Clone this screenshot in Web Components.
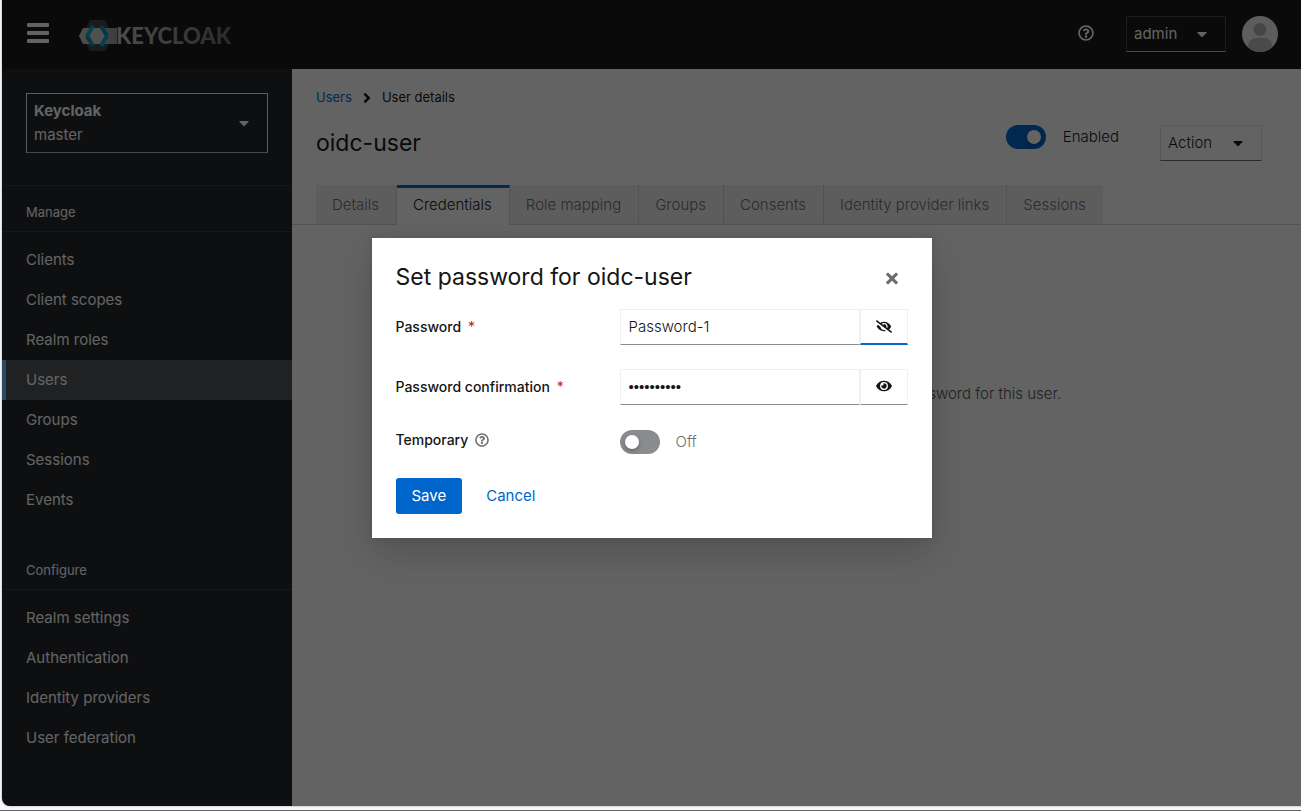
<!DOCTYPE html>
<html lang="en">
<head>
<meta charset="utf-8">
<meta name="viewport" content="width=device-width, initial-scale=1">
<title>Keycloak Administration Console</title>
<style>
  :root {
    --blue: #0066cc;
    --text: #151515;
    --text-muted: #6a6e73;
    --border: #d2d2d2;
    --border-light: #f0f0f0;
    --border-dark: #8a8d90;
  }

  body {
    margin: 0;
    background: #f6f6fb;
    color: var(--text);
    font-family: Inter, "Liberation Sans", sans-serif;
    font-size: 15px;
    line-height: 24px;
  }
</style>
</head>
<body>

<console-shell>
  <console-masthead slot="header" user="admin"></console-masthead>

  <console-sidebar slot="sidebar" realm="master">
    <nav-group label="Manage">
      <nav-item>Clients</nav-item>
      <nav-item>Client scopes</nav-item>
      <nav-item>Realm roles</nav-item>
      <nav-item current>Users</nav-item>
      <nav-item>Groups</nav-item>
      <nav-item>Sessions</nav-item>
      <nav-item>Events</nav-item>
    </nav-group>
    <nav-group label="Configure">
      <nav-item>Realm settings</nav-item>
      <nav-item>Authentication</nav-item>
      <nav-item>Identity providers</nav-item>
      <nav-item>User federation</nav-item>
    </nav-group>
  </console-sidebar>

  <user-header username="oidc-user"></user-header>
  <tab-bar>
    <tab-item>Details</tab-item>
    <tab-item current>Credentials</tab-item>
    <tab-item>Role mapping</tab-item>
    <tab-item>Groups</tab-item>
    <tab-item>Consents</tab-item>
    <tab-item>Identity provider links</tab-item>
    <tab-item>Sessions</tab-item>
  </tab-bar>
  <empty-state>This user does not have any credentials. You can set password for this user.</empty-state>

  <modal-dialog slot="modal" heading="Set password for oidc-user">
    <password-field label="Password" value="Password-1" revealed></password-field>
    <password-field label="Password confirmation" value="Password-1"></password-field>
    <switch-field label="Temporary"></switch-field>
    <action-button slot="actions" variant="primary">Save</action-button>
    <action-button slot="actions" variant="link">Cancel</action-button>
  </modal-dialog>
</console-shell>

<script>
// [viewBox width, viewBox height, path]
const ICONS = {
  bars: [22, 20, "M1 0h20a1 1 0 0 1 1 1v2a1 1 0 0 1-1 1H1a1 1 0 0 1-1-1V1a1 1 0 0 1 1-1zM1 8h20a1 1 0 0 1 1 1v2a1 1 0 0 1-1 1H1a1 1 0 0 1-1-1V9a1 1 0 0 1 1-1zM1 16h20a1 1 0 0 1 1 1v2a1 1 0 0 1-1 1H1a1 1 0 0 1-1-1v-2a1 1 0 0 1 1-1z"],
  caret: [320, 512, "M31.3 192h257.3c17.8 0 26.7 21.5 14.1 34.1L174.1 354.8c-7.8 7.8-20.5 7.8-28.3 0L17.2 226.1C4.6 213.5 13.5 192 31.3 192z"],
  angle: [256, 512, "M224.3 273l-136 136c-9.4 9.4-24.6 9.4-33.9 0l-22.6-22.6c-9.4-9.4-9.4-24.6 0-33.9l96.4-96.4-96.4-96.4c-9.4-9.4-9.4-24.6 0-33.9L54.3 103c9.4-9.4 24.6-9.4 33.9 0l136 136c9.5 9.4 9.5 24.6.1 34z"],
  times: [352, 512, "M242.72 256l100.07-100.07c12.28-12.28 12.28-32.19 0-44.48l-22.24-22.24c-12.28-12.28-32.19-12.28-44.48 0L176 189.28 75.93 89.21c-12.28-12.28-32.19-12.28-44.48 0L9.21 111.45c-12.28 12.28-12.28 32.19 0 44.48L109.28 256 9.21 356.07c-12.28 12.28-12.28 32.19 0 44.48l22.24 22.24c12.28 12.28 32.2 12.28 44.48 0L176 322.72l100.07 100.07c12.28 12.28 32.2 12.28 44.48 0l22.24-22.24c12.28-12.28 12.28-32.19 0-44.48L242.72 256z"],
  help: [512, 512, "M256 8C119.043 8 8 119.083 8 256c0 136.997 111.043 248 248 248s248-111.003 248-248C504 119.083 392.957 8 256 8zm0 440c-106 0-192-86-192-192S150 64 256 64s192 86 192 192-86 192-192 192zm107.244-247.2c0 67.052-72.421 68.084-72.421 92.863V300c0 6.627-5.373 12-12 12h-45.647c-6.627 0-12-5.373-12-12v-8.659c0-35.745 27.1-50.034 47.579-61.516 17.561-9.845 28.324-16.541 28.324-29.579 0-17.246-21.999-28.693-39.784-28.693-23.189 0-33.894 10.977-48.942 29.969-4.057 5.12-11.46 6.071-16.666 2.124l-27.824-21.098c-5.107-3.872-6.251-11.066-2.644-16.363C184.846 131.491 214.94 112 261.794 112c49.071 0 101.45 38.304 101.45 88.8zM298 368c0 23.159-18.841 42-42 42s-42-18.841-42-42 18.841-42 42-42 42 18.841 42 42z"],
  eye: [576, 512, "M572.52 241.4C518.29 135.59 410.93 64 288 64S57.68 135.64 3.48 241.41a32.35 32.35 0 0 0 0 29.19C57.71 376.41 165.07 448 288 448s230.32-71.64 284.52-177.41a32.35 32.35 0 0 0 0-29.19zM288 400a144 144 0 1 1 144-144 143.93 143.93 0 0 1-144 144zm0-240a95.31 95.31 0 0 0-25.31 3.79 47.85 47.85 0 0 1-66.9 66.9A95.78 95.78 0 1 0 288 160z"],
  eyeSlash: [640, 512, "M320 400c-75.85 0-137.25-58.71-142.9-133.11L72.2 185.82c-13.79 17.3-26.48 35.59-36.72 55.59a32.35 32.35 0 0 0 0 29.19C89.71 376.41 197.07 448 320 448c26.91 0 52.87-4 77.89-10.46L346 397.39a144.13 144.13 0 0 1-26 2.61zm313.82 58.1l-110.55-85.44a331.25 331.25 0 0 0 81.25-102.07 32.35 32.35 0 0 0 0-29.19C550.29 135.59 442.93 64 320 64a308.15 308.15 0 0 0-147.32 37.7L45.46 3.37A16 16 0 0 0 23 6.18L3.37 31.45A16 16 0 0 0 6.18 53.9l588.36 454.73a16 16 0 0 0 22.46-2.81l19.64-25.27a16 16 0 0 0-2.82-22.45zm-183.72-142l-39.3-30.38A94.75 94.75 0 0 0 416 256a94.76 94.76 0 0 0-121.31-92.21A47.65 47.65 0 0 1 304 192a46.64 46.64 0 0 1-1.54 10l-73.61-56.89A142.31 142.31 0 0 1 320 112a143.92 143.92 0 0 1 144 144c0 21.63-5.29 41.79-13.9 60.11z"],
};

function icon(name, width, height) {
  const [w, h, path] = ICONS[name];
  return `<svg viewBox="0 0 ${w} ${h}" width="${width}" height="${height}" fill="currentColor" aria-hidden="true"><path d="${path}"/></svg>`;
}

// Rules every shadow root starts with
const BASE_STYLE = `
  * { box-sizing: border-box; }
  svg { display: block; flex: none; }
  a { color: inherit; text-decoration: none; }
  button, input { margin: 0; font: inherit; color: inherit; }
  button { padding: 0; border: 0; background: none; cursor: pointer; }
`;

const SWITCH_STYLE = `
  .switch {
    flex: none;
    appearance: none;
    display: flex;
    align-items: center;
    width: 40px;
    height: 24px;
    padding: 0 5px;
    border-radius: 12px;
    background: var(--border-dark);
    cursor: pointer;
  }
  .switch::before {
    content: "";
    width: 14px;
    height: 14px;
    border-radius: 50%;
    background: #fff;
    box-shadow: 0 2px 4px rgba(3, 3, 3, .3);
  }
  .switch:checked { background: var(--blue); justify-content: flex-end; }
`;

class ConsoleElement extends HTMLElement {
  constructor() {
    super();
    this.attachShadow({ mode: "open" });
  }

  connectedCallback() {
    this.shadowRoot.innerHTML = `<style>${BASE_STYLE}${this.styles()}</style>${this.markup()}`;
  }
}

class ConsoleShell extends ConsoleElement {
  styles() {
    return `
      :host {
        display: flex;
        flex-direction: column;
        min-height: 100vh;
        box-sizing: border-box;
        padding: 0 0 4px 2px;
        border-bottom: 1px solid #66666b;
      }
      .frame {
        position: relative;
        flex: 1;
        display: grid;
        grid-template: auto 1fr / 290px 1fr;
        overflow: hidden;
        border-bottom-left-radius: 8px;
        background: #fff;
        box-shadow: 0 0 2px rgba(0, 0, 0, .4);
      }
      slot[name="header"] { display: block; grid-column: 1 / -1; }
      slot[name="sidebar"] { display: grid; }
      main { min-width: 0; }
    `;
  }

  markup() {
    return `
      <div class="frame">
        <slot name="header"></slot>
        <slot name="sidebar"></slot>
        <main><slot></slot></main>
        <slot name="modal"></slot>
      </div>
    `;
  }
}
customElements.define("console-shell", ConsoleShell);

class ConsoleMasthead extends ConsoleElement {
  styles() {
    return `
      :host { display: block; background: #151515; color: #fff; }
      header {
        display: flex;
        align-items: center;
        height: 69px;
        padding: 0 23px 1px 25px;
      }
      .menu { margin-right: 30px; padding-bottom: 2px; }
      .brand { margin-right: auto; padding-top: 3px; }
      .brand text { font: 900 22px Lato, sans-serif; }
      .help { margin-right: 32px; padding-bottom: 2px; }
      .account {
        display: flex;
        align-items: center;
        justify-content: space-between;
        width: 100px;
        height: 36px;
        margin-right: 16px;
        padding: 0 18px 0 7px;
        border: 1px solid #444548;
        border-bottom-color: #b8bbbe;
      }
      .avatar { border-radius: 50%; }
    `;
  }

  markup() {
    return `
      <header>
        <button class="menu" aria-label="Global navigation">${icon("bars", 22, 20)}</button>
        <a class="brand" href="#" aria-label="Keycloak home">
          <svg width="154" height="32" viewBox="0 0 154 32">
            <defs>
              <linearGradient id="word" gradientUnits="userSpaceOnUse" x1="38" y1="0" x2="152" y2="0">
                <stop offset="0" stop-color="#c4c4c4"/>
                <stop offset="1" stop-color="#6c6c6c"/>
              </linearGradient>
              <linearGradient id="band" x1="0" y1="0" x2="1" y2="0">
                <stop offset="0" stop-color="#c8c8c8"/>
                <stop offset="1" stop-color="#9c9c9c"/>
              </linearGradient>
            </defs>
            <path fill="#424242" d="M11 0h15l8 15.500-8 15.500H11L3 15.500z"/>
            <path fill="url(#band)" d="M4 8h34v16H4L0 16z"/>
            <path fill="#cecece" d="M15 8h6l5 8-5 8h-6l-5-8z"/>
            <g fill="none" stroke-width="4" stroke-linejoin="round">
              <path stroke="#00a8cf" d="M14 6 8 16"/>
              <path stroke="#008fb2" d="M8 16l6 10"/>
              <path stroke="#008fb2" d="M22 6l6 10"/>
              <path stroke="#00a8cf" d="M28 16l-6 10"/>
            </g>
            <text x="37" y="24" fill="url(#word)">KEYCLOAK</text>
          </svg>
        </a>
        <button class="help" aria-label="Help">${icon("help", 16, 16)}</button>
        <button class="account" aria-haspopup="menu"><span>${this.getAttribute("user")}</span>${icon("caret", 10, 16)}</button>
        <svg class="avatar" width="36" height="36" viewBox="0 0 36 36" role="img" aria-label="Avatar">
          <path fill="#f0f0f0" d="M0 0h36v36H0z"/>
          <circle cx="18" cy="13.500" r="6.500" fill="#b2b4b6"/>
          <path fill="#bcbec0" d="M6 36v-6c0-5 4-8 8-8h8c5 0 8 3 8 8v6z"/>
          <path fill="#b2b4b6" d="M12 36v-5l1 5zM25 36v-5l-1 5z"/>
        </svg>
      </header>
    `;
  }
}
customElements.define("console-masthead", ConsoleMasthead);

class ConsoleSidebar extends ConsoleElement {
  styles() {
    return `
      :host { display: block; background: #212427; color: #fff; }
      .realm {
        padding: 24px 24px 32px;
        border-bottom: 1px solid #35383b;
      }
      .realm button {
        display: flex;
        align-items: center;
        justify-content: space-between;
        width: 100%;
        height: 60px;
        padding: 0 18px 0 7px;
        border: 1px solid #f0f0f0;
        border-bottom-color: #b8bbbe;
        text-align: left;
      }
      strong, .name { display: block; }
    `;
  }

  markup() {
    return `
      <div class="realm">
        <button aria-haspopup="listbox">
          <span>
            <strong>Keycloak</strong>
            <span class="name">${this.getAttribute("realm")}</span>
          </span>
          ${icon("caret", 10, 16)}
        </button>
      </div>
      <nav aria-label="Global"><slot></slot></nav>
    `;
  }
}
customElements.define("console-sidebar", ConsoleSidebar);

class NavGroup extends ConsoleElement {
  styles() {
    return `
      :host { display: block; margin-bottom: 24px; }
      h2 {
        margin: 0 0 8px;
        padding: 16px 24px 8px;
        border-bottom: 1px solid #35383b;
        font-size: 13px;
        font-weight: 400;
        line-height: 21px;
      }
    `;
  }

  markup() {
    return `
      <section>
        <h2>${this.getAttribute("label")}</h2>
        <slot></slot>
      </section>
    `;
  }
}
customElements.define("nav-group", NavGroup);

class NavItem extends ConsoleElement {
  styles() {
    return `
      :host { display: block; }
      a {
        display: block;
        padding: 8px 24px 8px 20px;
        border-left: 4px solid transparent;
      }
      :host([current]) a { border-left-color: #73bcf7; background: #4f5255; }
    `;
  }

  markup() {
    return `<a href="#"><slot></slot></a>`;
  }
}
customElements.define("nav-item", NavItem);

class UserHeader extends ConsoleElement {
  styles() {
    return `
      :host { display: block; padding: 18px 39px 24px 24px; }
      ol {
        display: flex;
        align-items: center;
        margin: 0;
        padding: 0;
        list-style: none;
        font-size: 13px;
        line-height: 21px;
      }
      li { display: flex; align-items: center; }
      li svg { margin: 0 11px; }
      li a { color: var(--blue); }
      .row {
        display: flex;
        align-items: flex-start;
        margin-top: 17px;
      }
      h1 {
        margin: 0 auto 0 0;
        padding-top: 3px;
        font-size: 23px;
        font-weight: 400;
        line-height: 31px;
      }
      label {
        display: flex;
        align-items: center;
        gap: 17px;
        margin-right: 41px;
        font-weight: 300;
      }
      .action {
        display: flex;
        align-items: center;
        justify-content: space-between;
        width: 102px;
        height: 36px;
        padding: 0 18px 0 7px;
        border: 1px solid #e4e4e4;
        border-bottom-color: #6a6e73;
        font-weight: 300;
      }
      ${SWITCH_STYLE}
    `;
  }

  markup() {
    return `
      <nav aria-label="Breadcrumb">
        <ol>
          <li><a href="#">Users</a>${icon("angle", 8, 16)}</li>
          <li>User details</li>
        </ol>
      </nav>
      <div class="row">
        <h1>${this.getAttribute("username")}</h1>
        <label><input class="switch" type="checkbox" role="switch" checked>Enabled</label>
        <button class="action" aria-haspopup="menu"><span>Action</span>${icon("caret", 10, 16)}</button>
      </div>
    `;
  }
}
customElements.define("user-header", UserHeader);

class TabBar extends ConsoleElement {
  styles() {
    return `
      :host {
        display: flex;
        padding-left: 24px;
        border-bottom: 1px solid var(--border);
      }
    `;
  }

  markup() {
    return `<slot></slot>`;
  }
}
customElements.define("tab-bar", TabBar);

class TabItem extends ConsoleElement {
  styles() {
    return `
      :host { display: block; }
      a {
        display: block;
        height: 39px;
        padding: 8px 17px 7px 16px;
        border-right: 1px solid var(--border);
        background: #f0f0f0;
        color: var(--text-muted);
        font-weight: 300;
        white-space: nowrap;
      }
      :host(:last-child) a { border-right: 0; }
      /* the open tab runs over the line below the bar */
      :host([current]) { margin-bottom: -1px; }
      :host([current]) a {
        height: 40px;
        padding-top: 5px;
        border-top: 3px solid var(--blue);
        background: #fff;
        color: var(--text);
      }
    `;
  }

  markup() {
    return `<a href="#"><slot></slot></a>`;
  }
}
customElements.define("tab-item", TabItem);

class EmptyState extends ConsoleElement {
  styles() {
    return `
      :host { display: block; padding: 157px 24px 0; text-align: center; }
      p { margin: 0; color: #4f5255; font-weight: 300; }
    `;
  }

  markup() {
    return `<p><slot></slot></p>`;
  }
}
customElements.define("empty-state", EmptyState);

class ModalDialog extends ConsoleElement {
  styles() {
    return `
      :host {
        position: absolute;
        inset: 0;
        display: flex;
        align-items: center;
        justify-content: center;
        padding-bottom: 30px;
        background: rgba(3, 3, 3, .62);
      }
      dialog {
        position: static;
        width: 560px;
        max-width: 100%;
        margin: 0;
        padding: 24px;
        border: 0;
        background: #fff;
        color: var(--text);
        box-shadow: 0 16px 32px rgba(3, 3, 3, .16), 0 0 8px rgba(3, 3, 3, .1);
      }
      .title {
        display: flex;
        align-items: center;
        justify-content: space-between;
        margin-bottom: 16px;
      }
      h2 {
        margin: 0;
        font-size: 23px;
        font-weight: 400;
        line-height: 31px;
      }
      .close { margin-right: 10px; padding-top: 2px; color: var(--text-muted); }
      .fields { display: grid; gap: 24px; }
      .actions { display: flex; gap: 8px; margin-top: 24px; }
    `;
  }

  markup() {
    return `
      <dialog open aria-labelledby="title">
        <div class="title">
          <h2 id="title">${this.getAttribute("heading")}</h2>
          <button class="close" aria-label="Close">${icon("times", 12, 17)}</button>
        </div>
        <div class="fields"><slot></slot></div>
        <div class="actions"><slot name="actions"></slot></div>
      </dialog>
    `;
  }

  connectedCallback() {
    super.connectedCallback();
    this.shadowRoot.querySelector(".close").addEventListener("click", () => this.remove());
  }
}
customElements.define("modal-dialog", ModalDialog);

const FIELD_STYLE = `
  :host {
    display: grid;
    grid-template-columns: 208px minmax(0, 1fr);
    column-gap: 16px;
  }
  .label {
    display: flex;
    align-items: center;
    align-self: start;
    gap: 7px;
    font-size: 14px;
    font-weight: 500;
    line-height: 20px;
  }
`;

class PasswordField extends ConsoleElement {
  styles() {
    return `
      ${FIELD_STYLE}
      .label { padding-top: 8px; }
      .required { color: #c9190b; font-weight: 400; }
      .group { display: flex; }
      input {
        flex: 1;
        min-width: 0;
        height: 36px;
        padding: 0 8px 1px;
        border: 1px solid var(--border-light);
        border-bottom-color: var(--border-dark);
        border-radius: 0;
        outline: 0;
        background: #fff;
        font-weight: 300;
      }
      input[type="password"] { font-family: "Liberation Sans", sans-serif; }
      button {
        display: grid;
        place-items: center;
        width: 48px;
        height: 36px;
        padding-bottom: 2px;
        border: 1px solid var(--border-light);
        border-bottom-color: var(--border-dark);
      }
      :host([revealed]) button { padding-bottom: 1px; border-bottom: 2px solid var(--blue); }
    `;
  }

  markup() {
    const revealed = this.hasAttribute("revealed");
    return `
      <label class="label" for="password"><span>${this.getAttribute("label")}</span><span class="required" aria-hidden="true">*</span></label>
      <div class="group">
        <input id="password" type="${revealed ? "text" : "password"}" value="${this.getAttribute("value")}" required>
        <button type="button" aria-label="${revealed ? "Hide" : "Show"} password">${icon(revealed ? "eyeSlash" : "eye", 16, revealed ? 13 : 14)}</button>
      </div>
    `;
  }

  connectedCallback() {
    super.connectedCallback();
    this.shadowRoot.querySelector("button").addEventListener("click", () => {
      this.setAttribute("value", this.shadowRoot.querySelector("input").value);
      this.toggleAttribute("revealed");
      this.connectedCallback();
    });
  }
}
customElements.define("password-field", PasswordField);

class SwitchField extends ConsoleElement {
  styles() {
    return `
      ${FIELD_STYLE}
      :host { padding-top: 1px; }
      .help { color: var(--text-muted); }
      .value {
        display: flex;
        align-items: center;
        gap: 16px;
        color: var(--text-muted);
        font-weight: 300;
      }
      ${SWITCH_STYLE}
    `;
  }

  markup() {
    return `
      <div class="label">
        <label for="switch">${this.getAttribute("label")}</label>
        <button class="help" type="button" aria-label="More info">${icon("help", 14, 14)}</button>
      </div>
      <div class="value">
        <input class="switch" id="switch" type="checkbox" role="switch">
        <span class="state">Off</span>
      </div>
    `;
  }

  connectedCallback() {
    super.connectedCallback();
    this.shadowRoot.querySelector("input").addEventListener("change", (event) => {
      this.shadowRoot.querySelector(".state").textContent = event.target.checked ? "On" : "Off";
    });
  }
}
customElements.define("switch-field", SwitchField);

class ActionButton extends ConsoleElement {
  styles() {
    return `
      :host { display: block; }
      button { height: 36px; padding: 0 16px; border-radius: 3px; }
      :host([variant="primary"]) button { background: var(--blue); color: #fff; }
      :host([variant="link"]) button { color: var(--blue); }
    `;
  }

  markup() {
    return `<button type="button"><slot></slot></button>`;
  }
}
customElements.define("action-button", ActionButton);
</script>
</body>
</html>
